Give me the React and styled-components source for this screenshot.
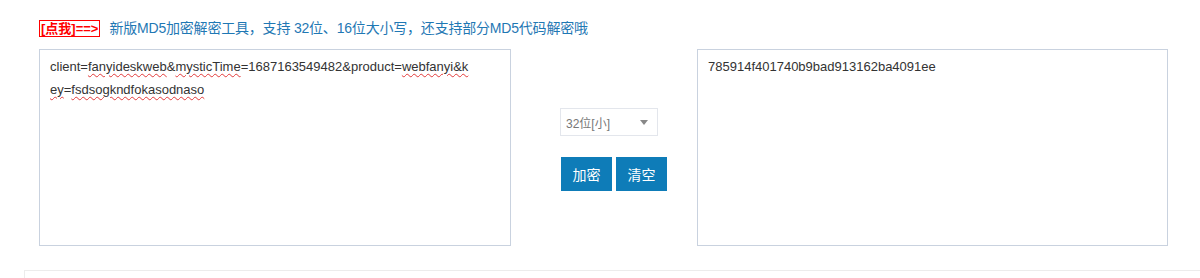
import React from "react";
import styled, { createGlobalStyle } from "styled-components";

const GlobalStyle = createGlobalStyle`
  html, body {
    margin: 0;
    padding: 0;
    background: #ffffff;
    font-family: "Liberation Sans", "Noto Sans CJK SC", Arial, sans-serif;
    overflow: hidden;
  }
`;

const Page = styled.div`
  width: 1200px;
  height: 278px;
  overflow: hidden;
`;

const ToolSection = styled.div`
  padding: 19px 0 0 39px;
`;

const Notice = styled.div`
  display: flex;
  align-items: center;
  height: 18px;
  font-size: 14px;
  line-height: 18px;
`;

const ClickTag = styled.a`
  display: inline-block;
  height: 15px;
  line-height: 15px;
  padding: 0 1px;
  border: 1px solid #ff0000;
  color: #ff0000;
  font-size: 13px;
  font-weight: bold;
  text-decoration: none;
`;

const NoticeText = styled.span`
  margin-left: 9px;
  color: #1f78b4;
  letter-spacing: -0.2px;
`;

const Workbench = styled.div`
  display: flex;
  margin-top: 12px;
`;

const TextBox = styled.div`
  box-sizing: border-box;
  width: ${(props) => props.$width}px;
  height: 197px;
  padding: 5px 10px;
  border: 1px solid #c9d2df;
  background: #fff;
  color: #333;
  font-size: 13px;
  line-height: 23px;
  word-break: break-all;
`;

const Misspelled = styled.span`
  text-decoration: underline wavy #e23a3a;
  text-decoration-thickness: 1px;
  text-underline-offset: 2px;
`;

const Controls = styled.div`
  width: 186px;
  padding: 59px 0 0 49px;
  box-sizing: border-box;
`;

const SelectBox = styled.div`
  box-sizing: border-box;
  display: flex;
  align-items: center;
  justify-content: space-between;
  width: 98px;
  height: 28px;
  padding: 1px 9px 0 5px;
  border: 1px solid #e3e6ec;
  color: #777;
  font-size: 12px;
`;

const Caret = styled.span`
  width: 0;
  height: 0;
  border-left: 4px solid transparent;
  border-right: 4px solid transparent;
  border-top: 5px solid #888;
`;

const ButtonRow = styled.div`
  display: flex;
  gap: 4px;
  margin-top: 21px;
  padding-left: 1px;
`;

const ActionButton = styled.button`
  width: 51px;
  height: 34px;
  padding: 0;
  border: none;
  background: #0e7cb8;
  color: #fff;
  font-family: "Liberation Sans", "Noto Sans CJK SC", sans-serif;
  font-size: 14px;
  cursor: pointer;
`;

const LowerPanel = styled.div`
  margin: 24px 0 0 24px;
  height: 40px;
  border-top: 1px solid #ececec;
  border-left: 1px solid #ececec;
`;

export default function App() {
  return (
    <Page>
      <GlobalStyle />
      <ToolSection>
        <Notice>
          <ClickTag href="#">[点我]==&gt;</ClickTag>
          <NoticeText>
            新版MD5加密解密工具，支持 32位、16位大小写，还支持部分MD5代码解密哦
          </NoticeText>
        </Notice>
        <Workbench>
          <TextBox $width={472}>
            client=<Misspelled>fanyideskweb</Misspelled>&amp;
            <Misspelled>mysticTime</Misspelled>=1687163549482&amp;product=
            <Misspelled>webfanyi&amp;k</Misspelled>
            <br />
            <Misspelled>ey</Misspelled>=<Misspelled>fsdsogkndfokasodnaso</Misspelled>
          </TextBox>
          <Controls>
            <SelectBox>
              <span>32位[小]</span>
              <Caret />
            </SelectBox>
            <ButtonRow>
              <ActionButton>加密</ActionButton>
              <ActionButton>清空</ActionButton>
            </ButtonRow>
          </Controls>
          <TextBox $width={471}>785914f401740b9bad913162ba4091ee</TextBox>
        </Workbench>
      </ToolSection>
      <LowerPanel />
    </Page>
  );
}
